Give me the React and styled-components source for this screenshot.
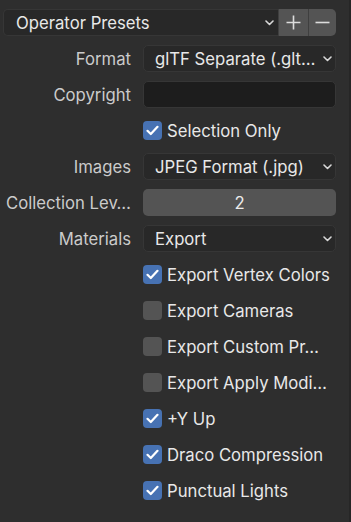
import React from "react";
import styled, { createGlobalStyle } from "styled-components";

const GlobalStyle = createGlobalStyle`
  html, body {
    margin: 0;
    padding: 0;
    background: #2e2e2e;
  }
  body {
    font-family: "Inter", "DejaVu Sans", sans-serif;
  }
`;

const Chevron = () => (
  <svg width="9" height="6" viewBox="0 0 9 6">
    <path d="M1 1 L4.5 4.5 L8 1" fill="none" stroke="#d8d8d8" strokeWidth="1.6" strokeLinecap="round" strokeLinejoin="round" />
  </svg>
);

const Check = () => (
  <svg width="13" height="11" viewBox="0 0 13 11">
    <path d="M1.5 5.8 L4.8 9 L11.5 1.8" fill="none" stroke="#ffffff" strokeWidth="2.2" strokeLinecap="round" strokeLinejoin="round" />
  </svg>
);

const rows = [
  { type: "select", label: "Format", value: "glTF Separate (.glt…" },
  { type: "text", label: "Copyright" },
  { type: "check", text: "Selection Only", on: true },
  { type: "select", label: "Images", value: "JPEG Format (.jpg)" },
  { type: "number", label: "Collection Lev…", value: "2" },
  { type: "select", label: "Materials", value: "Export" },
  { type: "check", text: "Export Vertex Colors", on: true },
  { type: "check", text: "Export Cameras", on: false },
  { type: "check", text: "Export Custom Pr…", on: false },
  { type: "check", text: "Export Apply Modi…", on: false },
  { type: "check", text: "+Y Up", on: true },
  { type: "check", text: "Draco Compression", on: true },
  { type: "check", text: "Punctual Lights", on: true },
];

const App = () => (
  <Panel>
    <GlobalStyle />
    <PresetRow>
      <PresetSelect>
        <span>Operator Presets</span>
        <Chevron />
      </PresetSelect>
      <IconButton>
        <svg width="15" height="15" viewBox="0 0 15 15">
          <path d="M7.5 0.5 V14.5 M0.5 7.5 H14.5" stroke="#dcdcdc" strokeWidth="1.6" />
        </svg>
      </IconButton>
      <IconButton last>
        <svg width="15" height="15" viewBox="0 0 15 15">
          <path d="M0.5 7.5 H14.5" stroke="#dcdcdc" strokeWidth="1.6" />
        </svg>
      </IconButton>
    </PresetRow>
    <Form>
      {rows.map((r, i) =>
        r.type === "check" ? (
          <React.Fragment key={i}>
            <span />
            <CheckRow>
              <Box on={r.on ? 1 : 0}>{r.on && <Check />}</Box>
              <span>{r.text}</span>
            </CheckRow>
          </React.Fragment>
        ) : (
          <React.Fragment key={i}>
            <Label>{r.label}</Label>
            {r.type === "select" && (
              <Select>
                <span>{r.value}</span>
                <Chevron />
              </Select>
            )}
            {r.type === "text" && <TextField />}
            {r.type === "number" && <NumberField>{r.value}</NumberField>}
          </React.Fragment>
        )
      )}
    </Form>
  </Panel>
);

export default App;

const Panel = styled.div`
  width: 351px;
  height: 522px;
  box-sizing: border-box;
  padding: 9px 13px 0 3px;
  background: #2e2e2e;
  border-right: 2px solid #262626;
  color: #e6e6e6;
  font-size: 16.7px;
`;

const PresetRow = styled.div`
  display: flex;
  height: 27px;
  margin-bottom: 9px;
`;

const PresetSelect = styled.div`
  flex: 1;
  display: flex;
  align-items: center;
  justify-content: space-between;
  padding: 0 4px 0 12px;
  background: #282828;
  border: 1px solid #363636;
  border-right: none;
  border-radius: 5px 0 0 5px;
  color: #e8e8e8;
`;

const IconButton = styled.div`
  width: ${(p) => (p.last ? "27px" : "29px")};
  display: flex;
  align-items: center;
  justify-content: center;
  background: #545454;
  border-left: 1px solid #3f3f3f;
  border-radius: ${(p) => (p.last ? "0 5px 5px 0" : "0")};
`;

const Form = styled.div`
  display: grid;
  grid-template-columns: 128px 1fr;
  column-gap: 12px;
  row-gap: 9px;
  grid-auto-rows: 27px;
`;

const Label = styled.div`
  display: flex;
  align-items: center;
  justify-content: flex-end;
  white-space: nowrap;
  color: #cbcbcb;
`;

const Field = styled.div`
  display: flex;
  align-items: center;
  box-sizing: border-box;
  border-radius: 5px;
  white-space: nowrap;
  overflow: hidden;
`;

const Select = styled(Field)`
  justify-content: space-between;
  padding: 0 3px 0 11px;
  background: #282828;
  border: 1px solid #363636;
  color: #e8e8e8;
`;

const TextField = styled(Field)`
  background: #1d1d1d;
  border: 1px solid #363636;
`;

const NumberField = styled(Field)`
  justify-content: center;
  background: #545454;
  color: #ececec;
`;

const CheckRow = styled.div`
  display: flex;
  align-items: center;
  gap: 5px;
  white-space: nowrap;
  color: #e8e8e8;
`;

const Box = styled.div`
  width: 19px;
  height: 19px;
  border-radius: 4px;
  display: flex;
  align-items: center;
  justify-content: center;
  background: ${(p) => (p.on ? "#4772b3" : "#545454")};
`;
